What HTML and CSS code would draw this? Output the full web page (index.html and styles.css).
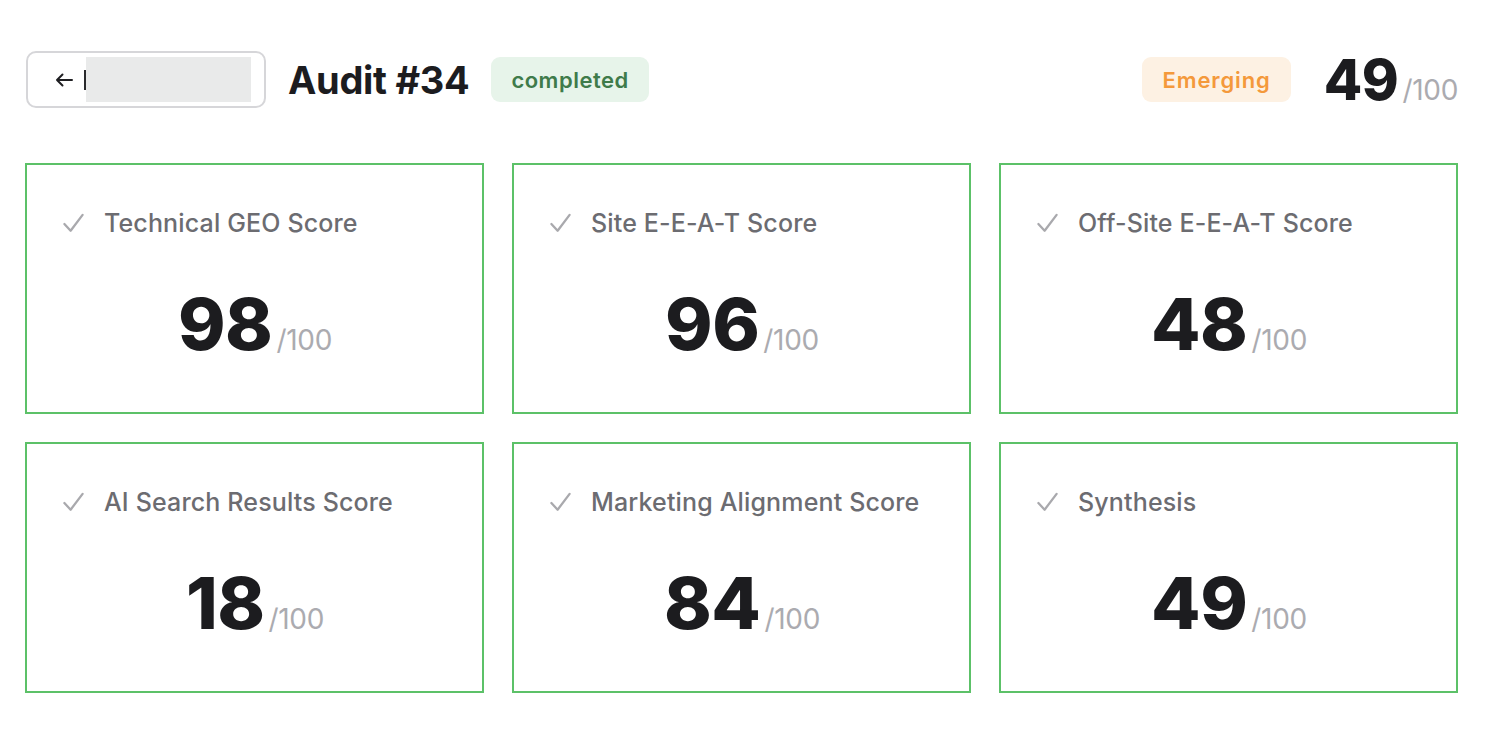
FILE: index.html
```html
<!DOCTYPE html>
<html lang="en">
<head>
<meta charset="utf-8">
<title>Audit #34</title>
<link rel="stylesheet" href="styles.css">
</head>
<body>
<div class="page">
  <header class="topbar">
    <div class="title-group">
      <button class="back-btn" type="button">
        <svg class="back-arrow" width="20" height="16" viewBox="0 0 20 16" fill="none" stroke="#1f1f22" stroke-width="2" stroke-linecap="round" stroke-linejoin="round"><path d="M18 8H3M8.5 2.5L3 8l5.5 5.5"/></svg>
        <span class="caret"></span>
        <span class="redacted"></span>
      </button>
      <h1 class="title">Audit #34</h1>
      <span class="badge badge-green">completed</span>
    </div>
    <div class="overall">
      <span class="badge badge-orange">Emerging</span>
      <div class="overall-score"><span class="big">49</span><span class="of">/100</span></div>
    </div>
  </header>

  <main class="grid">
    <section class="card">
      <div class="card-head"><svg class="check" viewBox="0 0 24 24" fill="none" stroke="#a9a9ad" stroke-width="2.4" stroke-linecap="round" stroke-linejoin="round"><path d="M2.5 12.5l6.5 7L21.5 3"/></svg><span>Technical GEO Score</span></div>
      <div class="score"><span class="num">98</span><span class="of">/100</span></div>
    </section>
    <section class="card">
      <div class="card-head"><svg class="check" viewBox="0 0 24 24" fill="none" stroke="#a9a9ad" stroke-width="2.4" stroke-linecap="round" stroke-linejoin="round"><path d="M2.5 12.5l6.5 7L21.5 3"/></svg><span>Site E-E-A-T Score</span></div>
      <div class="score"><span class="num">96</span><span class="of">/100</span></div>
    </section>
    <section class="card">
      <div class="card-head"><svg class="check" viewBox="0 0 24 24" fill="none" stroke="#a9a9ad" stroke-width="2.4" stroke-linecap="round" stroke-linejoin="round"><path d="M2.5 12.5l6.5 7L21.5 3"/></svg><span>Off-Site E-E-A-T Score</span></div>
      <div class="score"><span class="num">48</span><span class="of">/100</span></div>
    </section>
    <section class="card">
      <div class="card-head"><svg class="check" viewBox="0 0 24 24" fill="none" stroke="#a9a9ad" stroke-width="2.4" stroke-linecap="round" stroke-linejoin="round"><path d="M2.5 12.5l6.5 7L21.5 3"/></svg><span>AI Search Results Score</span></div>
      <div class="score"><span class="num">18</span><span class="of">/100</span></div>
    </section>
    <section class="card">
      <div class="card-head"><svg class="check" viewBox="0 0 24 24" fill="none" stroke="#a9a9ad" stroke-width="2.4" stroke-linecap="round" stroke-linejoin="round"><path d="M2.5 12.5l6.5 7L21.5 3"/></svg><span>Marketing Alignment Score</span></div>
      <div class="score"><span class="num">84</span><span class="of">/100</span></div>
    </section>
    <section class="card">
      <div class="card-head"><svg class="check" viewBox="0 0 24 24" fill="none" stroke="#a9a9ad" stroke-width="2.4" stroke-linecap="round" stroke-linejoin="round"><path d="M2.5 12.5l6.5 7L21.5 3"/></svg><span>Synthesis</span></div>
      <div class="score"><span class="num">49</span><span class="of">/100</span></div>
    </section>
  </main>
</div>
</body>
</html>
```

FILE: styles.css
```css
* { box-sizing: border-box; }

html, body {
  margin: 0;
  padding: 0;
  background: #ffffff;
}

body {
  font-family: Inter, "Noto Sans", "Liberation Sans", sans-serif;
  color: #1f1f22;
}

.page {
  padding: 51px 28px 0 25px;
}

.topbar {
  display: flex;
  align-items: center;
  justify-content: space-between;
  height: 57px;
  padding-left: 1px;
}

.title-group {
  display: flex;
  align-items: center;
}

.back-btn {
  display: flex;
  align-items: center;
  width: 240px;
  height: 57px;
  padding: 0 0 0 26px;
  background: #ffffff;
  border: 2px solid #d6d6d9;
  border-radius: 10px;
  font: inherit;
}

.back-arrow {
  display: block;
  flex: none;
}

.caret {
  width: 2px;
  height: 20px;
  background: #2a2a2d;
  margin-left: 10px;
  flex: none;
}

.redacted {
  width: 165px;
  height: 45px;
  background: #e9eaea;
  flex: none;
}

.title {
  margin: 0 0 0 22px;
  font-size: 38px;
  font-weight: 700;
  letter-spacing: -0.3px;
  color: #1c1c1f;
  line-height: 1;
}

.badge {
  display: inline-flex;
  align-items: center;
  height: 45px;
  padding: 0 20px;
  border-radius: 9px;
  font-size: 22px;
  font-weight: 600;
  letter-spacing: 0.5px;
}

.badge-green {
  margin-left: 22px;
  background: #e7f4ea;
  color: #3f7b4a;
}

.badge-orange {
  background: #fdf1e3;
  color: #f4993b;
  letter-spacing: 0.9px;
}

.overall {
  display: flex;
  align-items: center;
  gap: 33px;
}

.overall-score {
  display: flex;
  align-items: baseline;
}

.overall-score .big {
  font-size: 56px;
  font-weight: 800;
  color: #1c1c1f;
  letter-spacing: -0.5px;
  line-height: 1;
}

.overall-score .of {
  font-size: 28px;
  color: #ababb0;
  margin-left: 4px;
  letter-spacing: -0.3px;
}

.grid {
  display: grid;
  grid-template-columns: repeat(3, 1fr);
  gap: 28px;
  margin-top: 55px;
}

.card {
  height: 251px;
  border: 2px solid #5cc168;
  padding: 43px 30px 0 35px;
  display: flex;
  flex-direction: column;
}

.card-head {
  display: flex;
  align-items: center;
  gap: 19px;
  font-size: 25px;
  font-weight: 500;
  color: #6c6c71;
  height: 30px;
  letter-spacing: 0.15px;
}

.check {
  width: 23px;
  height: 23px;
  flex: none;
}

.score {
  display: flex;
  align-items: baseline;
  justify-content: center;
  margin-top: 50px;
  padding-right: 4px;
}

.score .num {
  font-size: 72px;
  font-weight: 800;
  color: #1c1c1f;
  line-height: 1;
  letter-spacing: -0.5px;
}

.score .of {
  font-size: 28px;
  color: #ababb0;
  margin-left: 4px;
  letter-spacing: -0.3px;
}
```
